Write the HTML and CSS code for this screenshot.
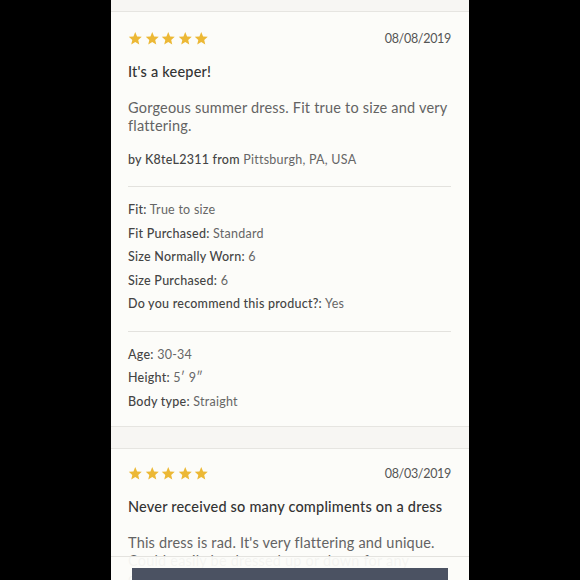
FILE: index.html
```html
<!DOCTYPE html>
<html lang="en">
<head>
<meta charset="utf-8">
<title>Reviews</title>
<link rel="stylesheet" href="styles.css">
</head>
<body>
<div class="page">
  <div class="band band--top"></div>

  <article class="review review--first">
    <div class="review-head">
      <div class="stars" aria-label="5 out of 5 stars">
        <svg class="star" viewBox="0 0 24 24"><path d="M12 1.8l3.05 7.1 7.7.7-5.85 5.1 1.75 7.5L12 18.2l-6.65 4 1.75-7.5L1.25 9.6l7.7-.7z"/></svg>
        <svg class="star" viewBox="0 0 24 24"><path d="M12 1.8l3.05 7.1 7.7.7-5.85 5.1 1.75 7.5L12 18.2l-6.65 4 1.75-7.5L1.25 9.6l7.7-.7z"/></svg>
        <svg class="star" viewBox="0 0 24 24"><path d="M12 1.8l3.05 7.1 7.7.7-5.85 5.1 1.75 7.5L12 18.2l-6.65 4 1.75-7.5L1.25 9.6l7.7-.7z"/></svg>
        <svg class="star" viewBox="0 0 24 24"><path d="M12 1.8l3.05 7.1 7.7.7-5.85 5.1 1.75 7.5L12 18.2l-6.65 4 1.75-7.5L1.25 9.6l7.7-.7z"/></svg>
        <svg class="star" viewBox="0 0 24 24"><path d="M12 1.8l3.05 7.1 7.7.7-5.85 5.1 1.75 7.5L12 18.2l-6.65 4 1.75-7.5L1.25 9.6l7.7-.7z"/></svg>
      </div>
      <span class="date">08/08/2019</span>
    </div>
    <h3 class="title">It's a keeper!</h3>
    <p class="body">Gorgeous summer dress. Fit true to size and very flattering.</p>
    <p class="author"><span class="lbl">by K8teL2311 from</span> <span class="val">Pittsburgh, PA, USA</span></p>
    <hr class="rule rule--first">
    <ul class="facts">
      <li><span class="lbl">Fit:</span> <span class="val">True to size</span></li>
      <li><span class="lbl">Fit Purchased:</span> <span class="val">Standard</span></li>
      <li><span class="lbl">Size Normally Worn:</span> <span class="val">6</span></li>
      <li><span class="lbl">Size Purchased:</span> <span class="val">6</span></li>
      <li><span class="lbl">Do you recommend this product?:</span> <span class="val">Yes</span></li>
    </ul>
    <hr class="rule">
    <ul class="facts">
      <li><span class="lbl">Age:</span> <span class="val">30-34</span></li>
      <li><span class="lbl">Height:</span> <span class="val">5′ 9″</span></li>
      <li><span class="lbl">Body type:</span> <span class="val">Straight</span></li>
    </ul>
  </article>

  <div class="band"></div>

  <article class="review">
    <div class="review-head">
      <div class="stars" aria-label="5 out of 5 stars">
        <svg class="star" viewBox="0 0 24 24"><path d="M12 1.8l3.05 7.1 7.7.7-5.85 5.1 1.75 7.5L12 18.2l-6.65 4 1.75-7.5L1.25 9.6l7.7-.7z"/></svg>
        <svg class="star" viewBox="0 0 24 24"><path d="M12 1.8l3.05 7.1 7.7.7-5.85 5.1 1.75 7.5L12 18.2l-6.65 4 1.75-7.5L1.25 9.6l7.7-.7z"/></svg>
        <svg class="star" viewBox="0 0 24 24"><path d="M12 1.8l3.05 7.1 7.7.7-5.85 5.1 1.75 7.5L12 18.2l-6.65 4 1.75-7.5L1.25 9.6l7.7-.7z"/></svg>
        <svg class="star" viewBox="0 0 24 24"><path d="M12 1.8l3.05 7.1 7.7.7-5.85 5.1 1.75 7.5L12 18.2l-6.65 4 1.75-7.5L1.25 9.6l7.7-.7z"/></svg>
        <svg class="star" viewBox="0 0 24 24"><path d="M12 1.8l3.05 7.1 7.7.7-5.85 5.1 1.75 7.5L12 18.2l-6.65 4 1.75-7.5L1.25 9.6l7.7-.7z"/></svg>
      </div>
      <span class="date">08/03/2019</span>
    </div>
    <h3 class="title">Never received so many compliments on a dress</h3>
    <p class="body">This dress is rad. It's very flattering and unique. Could easily be dressed up or down for any occasion.</p>
  </article>

  <div class="dock">
    <button class="dock-btn" type="button" aria-label="Write a Review"></button>
  </div>
</div>
</body>
</html>
```

FILE: styles.css
```css
* { box-sizing: border-box; }

html, body {
  margin: 0;
  padding: 0;
  background: #000;
}

.page {
  position: relative;
  width: 358px;
  height: 580px;
  margin: 0 auto;
  overflow: hidden;
  background: #fcfcf9;
  font-family: Lato, "Liberation Sans", sans-serif;
  color: #444;
}

.band {
  height: 23px;
  background: #f7f6f3;
  border-top: 1px solid #e6e5e1;
  border-bottom: 1px solid #e6e5e1;
}

.band--top {
  height: 12px;
  border-top: 0;
}

.review {
  padding: 14px 18px 13px 17px;
}

.review--first {
  padding-top: 16px;
}

.review-head {
  display: flex;
  align-items: center;
  justify-content: space-between;
  height: 20px;
}

.stars {
  display: flex;
  gap: 2px;
}

.star {
  width: 14.5px;
  height: 14.5px;
  fill: #ecb835;
}

.date {
  font-size: 12.5px;
  color: #555;
  letter-spacing: -0.3px;
}

.title {
  margin: 14px 0 0;
  font-size: 14.5px;
  line-height: 20px;
  font-weight: 500;
  color: #333;
  letter-spacing: 0.2px;
}

.body {
  margin: 17px 0 0;
  font-size: 14.5px;
  line-height: 18px;
  color: #636363;
  letter-spacing: 0.2px;
}

.author {
  margin: 16px 0 0;
  font-size: 12.5px;
  line-height: 18px;
  letter-spacing: 0.25px;
}

.lbl {
  color: #444;
  font-weight: 500;
}

.val {
  color: #666;
}

.rule {
  margin: 15px 0 0;
  border: 0;
  border-top: 1px solid #e3e2de;
}

.rule--first {
  margin-top: 17px;
}

.facts {
  list-style: none;
  margin: 11px 0 0;
  padding: 0;
  font-size: 12.5px;
  line-height: 23.5px;
  letter-spacing: 0.25px;
}

.dock {
  position: absolute;
  left: 0;
  right: 0;
  bottom: 0;
  height: 24px;
  padding: 11px 21px 0;
  background: rgba(252, 252, 249, 0.95);
  border-top: 1px solid #e4e3df;
}

.dock-btn {
  display: block;
  width: 100%;
  height: 40px;
  border: 0;
  background: #4b5262;
}
```
